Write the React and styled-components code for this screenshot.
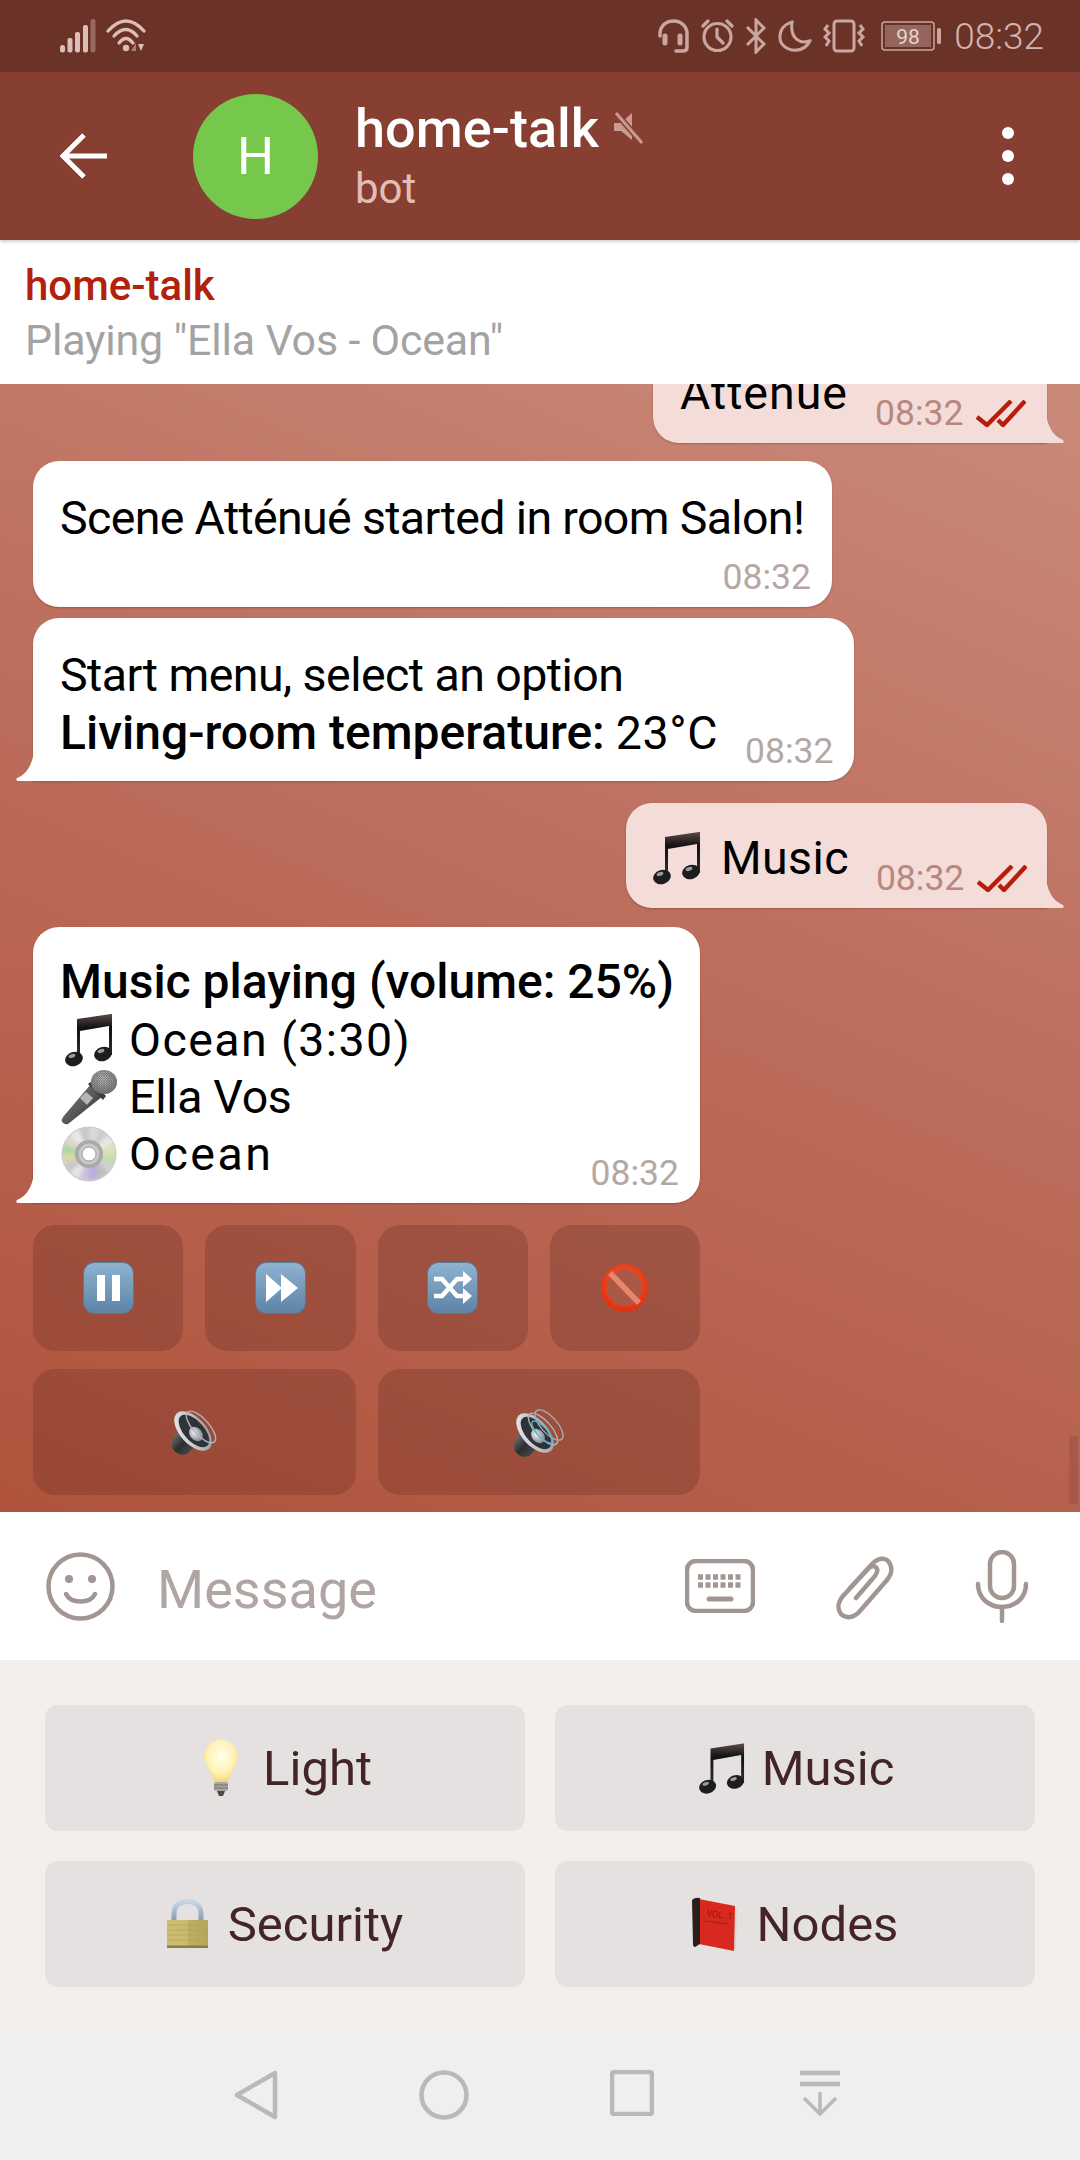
import React from "react";
import styled, { createGlobalStyle } from "styled-components";

const GlobalStyle = createGlobalStyle`
  html, body { margin: 0; padding: 0; background: #fff; }
  * { box-sizing: border-box; }
  body { font-family: Roboto, "Liberation Sans", sans-serif; }
`;

const Screen = styled.div`
  width: 1080px;
  height: 2160px;
  display: flex;
  flex-direction: column;
  overflow: hidden;
`;

const StatusBar = styled.div`
  height: 72px;
  flex: none;
  display: flex;
  align-items: center;
  padding: 0 36px 0 60px;
  background: #6b3228;
  color: #c9a6a0;
`;

const StatusGroup = styled.div`
  display: flex;
  align-items: center;
  gap: ${p => p.$gap || 11}px;
  margin-left: ${p => (p.$right ? "auto" : "0")};
`;

const Clock = styled.span`
  font-size: 37px;
  font-weight: 300;
  margin-left: 1px;
  color: #d2b3ae;
`;

const TopBar = styled.header`
  height: 168px;
  flex: none;
  display: flex;
  align-items: center;
  padding: 0 60px;
  background: #873f32;
  box-shadow: 0 2px 3px rgba(0, 0, 0, 0.18);
  position: relative;
  z-index: 3;
`;

const BackButton = styled.div`
  width: 133px;
  display: flex;
  align-items: center;
`;

const Avatar = styled.div`
  width: 125px;
  height: 125px;
  flex: none;
  border-radius: 50%;
  background: #76c84d;
  color: #fff;
  font-size: 52px;
  display: flex;
  align-items: center;
  justify-content: center;
`;

const TitleBlock = styled.div`
  margin-left: 37px;
  flex: 1;
  padding-top: 4px;
`;

const TitleRow = styled.div`
  display: flex;
  align-items: center;
  gap: 14px;
  height: 62px;
`;

const Title = styled.span`
  color: #fff;
  font-size: 54px;
  font-weight: 500;
`;

const Subtitle = styled.div`
  color: #e3bdb5;
  font-size: 42px;
  line-height: 60px;
`;

const DotsButton = styled.div`
  display: flex;
  flex-direction: column;
  gap: 11px;
  margin-right: 6px;
`;

const Dot = styled.i`
  width: 12px;
  height: 12px;
  border-radius: 50%;
  background: #fff;
`;

const Pinned = styled.div`
  height: 144px;
  flex: none;
  padding: 20px 25px 0;
  background: #fff;
  position: relative;
  z-index: 2;
`;

const PinnedName = styled.div`
  color: #b3200b;
  font-size: 42px;
  font-weight: 500;
  line-height: 52px;
`;

const PinnedText = styled.div`
  color: #a3a3a3;
  font-size: 43px;
  letter-spacing: -0.2px;
  line-height: 56px;
`;

const Chat = styled.main`
  flex: 1;
  min-height: 0;
  position: relative;
  overflow: hidden;
  display: flex;
  flex-direction: column;
  justify-content: flex-end;
  padding: 0 33px 17px;
  background: linear-gradient(203deg, #ca8a7a 0%, #bd6e5d 45%, #af533c 100%);
`;

const ScrollThumb = styled.div`
  position: absolute;
  right: 2px;
  bottom: 8px;
  width: 9px;
  height: 68px;
  background: rgba(120, 60, 50, 0.25);
`;

const Bubble = styled.div`
  flex: none;
  position: relative;
  display: flex;
  flex-direction: ${p => (p.$row ? "row" : "column")};
  align-items: ${p => (p.$row ? "flex-end" : "stretch")};
  align-self: ${p => (p.$out ? "flex-end" : "flex-start")};
  width: ${p => p.$w}px;
  margin-top: ${p => p.$mt || 0}px;
  padding: 26px 27px 10px 27px;
  background: ${p => (p.$out ? "#f4dcd8" : "#fff")};
  color: #000;
  border-radius: 26px;
  border-bottom-left-radius: ${p => (p.$tail && !p.$out ? 0 : 26)}px;
  border-bottom-right-radius: ${p => (p.$out ? 0 : 26)}px;
  box-shadow: 0 1px 2px rgba(70, 20, 10, 0.28);
`;

const Tail = styled.svg`
  position: absolute;
  bottom: 0;
  width: 18px;
  height: 34px;
  ${p => (p.$out ? "right: -17px;" : "left: -17px;")}
`;

const Text = styled.div`
  font-size: 46.5px;
  line-height: 57px;
  letter-spacing: ${p => p.$ls || 0}px;
  margin-top: ${p => p.$mt || 0}px;
  margin-bottom: ${p => p.$mb || 0}px;
  white-space: nowrap;
`;

const Strong = styled.b`
  font-weight: 500;
  font-size: 48px;
  letter-spacing: 0;
`;

const Temperature = styled.span`
  letter-spacing: 0.6px;
`;

const IconLine = styled.div`
  display: flex;
  align-items: center;
  gap: ${p => p.$gap || 12}px;
  font-size: 46.5px;
  letter-spacing: ${p => p.$ls || 0}px;
  height: 57px;
  white-space: nowrap;
  margin-bottom: ${p => p.$mb || 0}px;
`;

const EmojiSlot = styled.span`
  width: 57px;
  flex: none;
  display: flex;
  justify-content: center;
`;

const Meta = styled.div`
  display: flex;
  align-items: center;
  flex: none;
  font-size: 35.5px;
  line-height: 40px;
  height: 40px;
  gap: 13px;
  color: ${p => (p.$out ? "#b78880" : "#b5a8a4")};
  align-self: flex-end;
  margin-top: ${p => p.$mt || 0}px;
  margin-left: ${p => p.$ml || 0}px;
  margin-right: ${p => p.$mr ?? -6}px;
`;

const InlineGrid = styled.div`
  display: grid;
  grid-template-columns: repeat(${p => p.$cols}, 1fr);
  gap: 18px 22px;
  width: 667px;
  margin-top: ${p => p.$mt || 0}px;
  flex: none;
`;

const InlineButton = styled.div`
  height: 126px;
  border-radius: 22px;
  background: rgba(95, 40, 30, 0.27);
  display: flex;
  align-items: center;
  justify-content: center;
`;

const InputBar = styled.div`
  height: 148px;
  flex: none;
  display: flex;
  align-items: center;
  padding: 0 51px 0 46px;
  background: #fff;
  color: #a29693;
`;

const Placeholder = styled.div`
  flex: 1;
  margin-left: 42px;
  padding-top: 6px;
  color: #b0a5a2;
  font-size: 54px;
`;

const InputActions = styled.div`
  display: flex;
  align-items: center;
  gap: 81px;
`;

const KeyPanel = styled.div`
  height: 370px;
  flex: none;
  display: grid;
  grid-template-columns: 480px 480px;
  grid-auto-rows: 126px;
  gap: 30px;
  padding: 45px;
  background: #f2efed;
`;

const KeyButton = styled.div`
  border-radius: 13px;
  background: #e6e1e1;
  color: #432526;
  font-size: 49px;
  display: flex;
  align-items: center;
  justify-content: center;
  gap: ${p => p.$gap || 20}px;
  padding-left: ${p => p.$pl || 0}px;
`;

const NavBar = styled.nav`
  height: 130px;
  flex: none;
  display: grid;
  grid-template-columns: repeat(4, 48px);
  justify-content: center;
  align-content: center;
  column-gap: 140px;
  background: #efefef;
  color: #b9b9b9;
  justify-items: center;
  padding: 0 4px 0 0;
`;

const Check = () => (
  <svg width="50" height="27" viewBox="0 0 50 27" fill="none" stroke="#b71c0c" strokeWidth="4.4">
    <path d="M1 17 L11 25 L35 1" />
    <path d="M22 20 L27 25 L49 1" />
  </svg>
);

const LeftTail = () => (
  <Tail viewBox="0 0 18 34">
    <path d="M18 0 C18 14 12 27 1 31 C0 32 0 34 2 34 L18 34 Z" fill="#fff" />
  </Tail>
);

const RightTail = () => (
  <Tail $out viewBox="0 0 18 34">
    <path d="M0 0 C0 14 6 27 17 31 C18 32 18 34 16 34 L0 34 Z" fill="#f4dcd8" />
  </Tail>
);

const NoteEmoji = ({ id, w = 48, h = 54 }) => (
  <svg width={w} height={h} viewBox="0 0 48 54">
    <defs>
      <linearGradient id={id} x1="0" y1="0" x2="0" y2="1">
        <stop offset="0" stopColor="#5d4a4a" />
        <stop offset="0.3" stopColor="#111" />
        <stop offset="1" stopColor="#333" />
      </linearGradient>
    </defs>
    <path d="M12 6 L46 1 L47 1 L47 42 L44 42 L44 13 L15 18 L15 47 L12 47 Z" fill={`url(#${id})`} />
    <ellipse cx="9" cy="46" rx="9" ry="7" transform="rotate(-18 9 46)" fill="#1d1d1f" />
    <ellipse cx="38" cy="41" rx="9" ry="7" transform="rotate(-18 38 41)" fill="#1d1d1f" />
    <ellipse cx="7" cy="43" rx="3.5" ry="1.8" transform="rotate(-18 7 43)" fill="#9a9aa0" />
    <ellipse cx="36" cy="38" rx="3.5" ry="1.8" transform="rotate(-18 36 38)" fill="#9a9aa0" />
  </svg>
);

const MicEmoji = () => (
  <svg width="56" height="56" viewBox="0 0 56 56">
    <defs>
      <linearGradient id="micBody" x1="0" y1="0" x2="1" y2="1">
        <stop offset="0" stopColor="#7b7b7b" />
        <stop offset="0.5" stopColor="#5a5a5a" />
        <stop offset="1" stopColor="#1f1f1f" />
      </linearGradient>
      <radialGradient id="micHead" cx="0.45" cy="0.35" r="0.75">
        <stop offset="0" stopColor="#d0d0d0" />
        <stop offset="1" stopColor="#777" />
      </radialGradient>
      <pattern id="micMesh" width="2.4" height="2.4" patternUnits="userSpaceOnUse">
        <path d="M0 0 L2.4 2.4 M2.4 0 L0 2.4" stroke="#4a4a4a" strokeWidth="0.5" />
      </pattern>
    </defs>
    <path d="M30 15 L42 27 L7 55 Q4 56 1 53 Q0 51 2 48 Z" fill="url(#micBody)" />
    <path d="M19 29 L25 23 L32 29 L26 36 Z" fill="#b5b5b5" />
    <path d="M27 15 L42 31 L45 27 L31 12 Z" fill="#3d3d3d" />
    <ellipse cx="43" cy="13" rx="13" ry="12" fill="url(#micHead)" />
    <ellipse cx="43" cy="13" rx="13" ry="12" fill="url(#micMesh)" />
  </svg>
);

const wedge = (a, b) => {
  const p = d => [28 + 27 * Math.cos((d * Math.PI) / 180), 28 + 27 * Math.sin((d * Math.PI) / 180)];
  const [x1, y1] = p(a);
  const [x2, y2] = p(b);
  return `M28 28 L${x1} ${y1} A27 27 0 0 1 ${x2} ${y2} Z`;
};

const CD_COLORS = ["#dcdcdc", "#cbcbcb", "#e9e9e9", "#dfe0b8", "#bfe0a8", "#d0d0d0", "#bcbcbc", "#b9aedb", "#cfc0df", "#e6e6e6", "#c7c7c7", "#d9d9a8", "#a9d89c", "#dad6cf", "#ececec", "#c4c4c4"];

const CdEmoji = () => (
  <svg width="56" height="56" viewBox="0 0 56 56">
    <defs>
      <filter id="cdBlur" x="-10%" y="-10%" width="120%" height="120%">
        <feGaussianBlur stdDeviation="2.2" />
      </filter>
      <clipPath id="cdClip">
        <circle cx="28" cy="28" r="27" />
      </clipPath>
    </defs>
    <g clipPath="url(#cdClip)">
      <rect width="56" height="56" fill="#d4d4d4" />
      <g filter="url(#cdBlur)">
        {CD_COLORS.map((c, i) => (
          <path key={i} d={wedge(i * 22.5 - 90, (i + 1) * 22.5 - 90)} fill={c} />
        ))}
      </g>
    </g>
    <circle cx="28" cy="28" r="27" fill="none" stroke="#c9c9c9" strokeWidth="1" />
    <circle cx="28" cy="28" r="14" fill="#a9a9a9" />
    <circle cx="28" cy="28" r="10.5" fill="#c9c9c9" />
    <circle cx="28" cy="28" r="7" fill="#fff" stroke="#8d8d8d" strokeWidth="0.8" />
  </svg>
);

const BlueKey = ({ id, children }) => (
  <svg width="51" height="52" viewBox="0 0 51 52">
    <defs>
      <linearGradient id={id} x1="0" y1="0" x2="0" y2="1">
        <stop offset="0" stopColor="#8fb3d1" />
        <stop offset="1" stopColor="#5d83a5" />
      </linearGradient>
    </defs>
    <rect x="0.5" y="0.5" width="50" height="51" rx="11" fill={`url(#${id})`} stroke="#577a98" />
    {children}
  </svg>
);

const PauseEmoji = () => (
  <BlueKey id="pauseKey">
    <rect x="14" y="13" width="8" height="26" fill="#fff" />
    <rect x="29" y="13" width="8" height="26" fill="#fff" />
  </BlueKey>
);

const ForwardEmoji = () => (
  <BlueKey id="forwardKey">
    <path d="M11 12 L27 26 L11 40 Z M26 12 L43 26 L26 40 Z" fill="#fff" />
  </BlueKey>
);

const ShuffleEmoji = () => (
  <BlueKey id="shuffleKey">
    <path d="M7 17 H15 L30 34 H38" fill="none" stroke="#fff" strokeWidth="4.5" />
    <path d="M7 34 H15 L30 17 H38" fill="none" stroke="#fff" strokeWidth="4.5" />
    <path d="M36 9 L45 17 L36 25 Z M36 26 L45 34 L36 42 Z" fill="#fff" />
  </BlueKey>
);

const NoEntryEmoji = () => (
  <svg width="47" height="48" viewBox="0 0 47 48">
    <defs>
      <radialGradient id="noEntry" cx="0.5" cy="0.4" r="0.65">
        <stop offset="0" stopColor="#fa6238" />
        <stop offset="1" stopColor="#e2300f" />
      </radialGradient>
    </defs>
    <ellipse cx="23.5" cy="24" rx="20.5" ry="21" fill="#a85a46" stroke="url(#noEntry)" strokeWidth="6" />
    <path d="M9 9 L38 39" stroke="#e8866c" strokeWidth="5.5" />
  </svg>
);

const SpeakerEmoji = ({ id, loud }) => (
  <svg width={loud ? 53 : 48} height={loud ? 52 : 48} viewBox={loud ? "0 -4 53 52" : "0 0 48 48"}>
    <defs>
      <linearGradient id={id} x1="0" y1="0" x2="1" y2="1">
        <stop offset="0" stopColor="#f0f2f4" />
        <stop offset="1" stopColor="#8f959a" />
      </linearGradient>
      <radialGradient id={`${id}Ball`} cx="0.45" cy="0.35" r="0.7">
        <stop offset="0" stopColor="#eef1f3" />
        <stop offset="1" stopColor="#767d83" />
      </radialGradient>
      <linearGradient id={`${id}Back`} x1="0" y1="0" x2="1" y2="1">
        <stop offset="0" stopColor="#8b8f93" />
        <stop offset="0.5" stopColor="#2b2d2f" />
        <stop offset="1" stopColor="#55595c" />
      </linearGradient>
    </defs>
    <path d="M5 27 L15 20 L27 36 L17 46 Q9 49 3 41 Q0 34 5 27 Z" fill={`url(#${id}Back)`} />
    <ellipse cx="23" cy="23" rx="13" ry="24" transform="rotate(-42 23 23)" fill={`url(#${id})`} />
    <ellipse cx="24" cy="23" rx="10" ry="20" transform="rotate(-42 24 23)" fill="#2f3337" />
    <ellipse cx="26" cy="26" rx="6" ry="8" transform="rotate(-42 26 26)" fill={`url(#${id}Ball)`} />
    <ellipse cx="31" cy="19" rx="8" ry="20" transform="rotate(-42 31 19)" fill="none" stroke="#aeb8bc" strokeWidth="1.4" />
    {loud && <ellipse cx="37" cy="15" rx="8" ry="19" transform="rotate(-42 37 15)" fill="none" stroke="#9fb0b6" strokeWidth="1.4" />}
    {loud && <ellipse cx="30" cy="22" rx="5" ry="14" transform="rotate(-42 30 22)" fill="none" stroke="#57b4ce" strokeWidth="1.4" />}
  </svg>
);

const BulbEmoji = () => (
  <svg width="34" height="56" viewBox="0 0 34 56">
    <defs>
      <radialGradient id="bulbGlow" cx="0.5" cy="0.4" r="0.6">
        <stop offset="0" stopColor="#fffef0" />
        <stop offset="0.65" stopColor="#fff3b5" />
        <stop offset="1" stopColor="#f1d777" />
      </radialGradient>
    </defs>
    <path d="M17 0 C27 0 34 8 34 17 C34 26 25 33 24 42 L10 42 C9 33 0 26 0 17 C0 8 7 0 17 0 Z" fill="url(#bulbGlow)" />
    <rect x="10" y="42" width="14" height="9" rx="2" fill="#a9a89f" />
    <path d="M10 45 H24 M10 48 H24" stroke="#6f6e66" strokeWidth="1" />
    <path d="M13 51 H21 L19 56 H15 Z" fill="#4a4a46" />
  </svg>
);

const LockEmoji = () => (
  <svg width="41" height="50" viewBox="0 0 41 50">
    <defs>
      <linearGradient id="lockBody" x1="0" y1="0" x2="1" y2="0">
        <stop offset="0" stopColor="#cdbf70" />
        <stop offset="0.5" stopColor="#c9bb6c" />
        <stop offset="0.52" stopColor="#bcae62" />
        <stop offset="1" stopColor="#b4a65c" />
      </linearGradient>
      <linearGradient id="lockShackle" x1="0" y1="0" x2="0" y2="1">
        <stop offset="0" stopColor="#c6d6e6" />
        <stop offset="1" stopColor="#8098ad" />
      </linearGradient>
    </defs>
    <path d="M7 23 V15 C7 6 13 2.5 20.5 2.5 C28 2.5 34 6 34 15 V23" fill="none" stroke="url(#lockShackle)" strokeWidth="5" />
    <rect x="0" y="21" width="41" height="27" rx="1" fill="url(#lockBody)" />
    <path d="M0 26 H41 M0 31 H41 M0 36 H41 M0 41 H41" stroke="#b3a45c" strokeWidth="0.8" />
    <rect x="0" y="46.5" width="41" height="2.5" fill="#8a7e48" />
  </svg>
);

const BookEmoji = () => (
  <svg width="45" height="55" viewBox="0 0 45 55">
    <path d="M8 3 L45 11 L44 53 L7 47 Z" fill="#d9d4cf" />
    <path d="M7 2 L43 9 L42 54 L7 47 Z" fill="#d9281f" />
    <path d="M0 3 Q3 0 8 1 L8 47 L3 50 Q1 50 1 47 Z" fill="#2a1f1d" />
    <text x="14" y="19" fontSize="9" fill="#97170f" fontFamily="Roboto, sans-serif" transform="rotate(8 14 19)">VOL. 1</text>
    <path d="M13 24 L36 27" stroke="#a51c14" strokeWidth="1.2" />
  </svg>
);

const SignalIcon = () => (
  <svg width="36" height="34" viewBox="0 0 36 34" fill="#dcbdb8">
    <rect x="0" y="26" width="5" height="7.5" rx="2.5" />
    <rect x="7.5" y="19" width="5" height="14.5" rx="2" />
    <rect x="15" y="13" width="5" height="20.5" rx="2" />
    <rect x="23" y="6" width="5" height="27.5" rx="2" />
    <rect x="30.5" y="0" width="5" height="33.5" rx="2" opacity="0.4" />
  </svg>
);

const WifiIcon = () => (
  <svg width="42" height="34" viewBox="0 0 42 34" fill="none" stroke="#dcbdb8" strokeWidth="3.3" strokeLinecap="round">
    <path d="M3 12 Q21 -8 39 12" />
    <path d="M9 17 Q21 4 32 17" />
    <path d="M14 24 Q21 15 28 24" />
    <circle cx="21" cy="29" r="3.2" fill="#dcbdb8" stroke="none" />
    <path d="M26 32 L31 24 V32 Z" fill="#dcbdb8" stroke="none" opacity="0.55" />
    <path d="M33 25 H39 L36 32 Z" fill="#dcbdb8" stroke="none" />
  </svg>
);

const HeadsetIcon = () => (
  <svg width="33" height="34" viewBox="0 0 33 34" fill="none" stroke="currentColor" strokeWidth="3.5" strokeLinecap="round">
    <path d="M3 17 V15 C3 7 9 2 16.5 2 C24 2 30 7 30 15 V28 C30 31 28 32 26 32 H19" />
    <path d="M8 17 V24 M23 17 V24" strokeWidth="5" />
  </svg>
);

const AlarmIcon = () => (
  <svg width="33" height="34" viewBox="0 0 33 34" fill="none" stroke="currentColor" strokeWidth="3.2" strokeLinecap="round">
    <circle cx="16.5" cy="18" r="13.5" />
    <path d="M16 10 V18 L22 24" />
    <path d="M2 7 L7 2 M31 7 L26 2" />
  </svg>
);

const BluetoothIcon = () => (
  <svg width="22" height="36" viewBox="0 0 22 36" fill="none" stroke="currentColor" strokeWidth="3">
    <path d="M2 9 L19 26 L11 34 V2 L19 10 L2 27" />
  </svg>
);

const MoonIcon = () => (
  <svg width="34" height="34" viewBox="0 0 36 34" fill="none" stroke="currentColor" strokeWidth="3.2">
    <path d="M15 2 C6 5 2 11 2 18 C2 26 9 32 18 32 C25 32 31 28 34 22 C24 26 12 20 15 2 Z" strokeLinejoin="round" />
  </svg>
);

const VibrateIcon = () => (
  <svg width="47" height="34" viewBox="0 0 47 34" fill="none" stroke="currentColor" strokeWidth="3">
    <rect x="11" y="2" width="20" height="30" rx="3" />
    <path d="M5 6 L2 10 L6 14 L2 18 L6 22 L3 27" />
    <path d="M37 6 L40 10 L36 14 L40 18 L36 22 L39 27" />
  </svg>
);

const BatteryIcon = () => (
  <svg width="61" height="30" viewBox="0 0 61 30">
    <rect x="1" y="1" width="52" height="28" rx="3" fill="none" stroke="currentColor" strokeWidth="1.5" />
    <rect x="4" y="4" width="46" height="22" fill="currentColor" opacity="0.45" />
    <rect x="56" y="7" width="4" height="16" rx="1.5" fill="currentColor" />
    <text x="27" y="23" textAnchor="middle" fontSize="21" fill="#e6d3d0" fontFamily="Roboto, sans-serif">98</text>
  </svg>
);

const ArrowBack = () => (
  <svg width="48" height="46" viewBox="0 0 48 46" fill="none" stroke="#fff" strokeWidth="5">
    <path d="M47 23 H4 M24 2 L3 23 L24 44" />
  </svg>
);

const MuteIcon = () => (
  <svg width="30" height="32" viewBox="0 0 30 32">
    <path d="M1 11 H8 L19 1 V28 L8 19 H1 Z" fill="#c99a91" />
    <path d="M3 1 L29 31" stroke="#873f32" strokeWidth="6" />
    <path d="M3 1 L29 31" stroke="#c99a91" strokeWidth="3" />
  </svg>
);

const SmileIcon = () => (
  <svg width="69" height="69" viewBox="0 0 69 69" fill="none" stroke="currentColor" strokeWidth="4.5">
    <circle cx="34.5" cy="34.5" r="32" />
    <circle cx="23" cy="27" r="4" fill="currentColor" stroke="none" />
    <circle cx="46" cy="27" r="4" fill="currentColor" stroke="none" />
    <path d="M20 42 C25 52 44 52 49 42" strokeLinecap="round" />
  </svg>
);

const KeyboardIcon = () => (
  <svg width="70" height="54" viewBox="0 0 70 54" fill="none" stroke="currentColor" strokeWidth="4.5">
    <rect x="2" y="2" width="66" height="50" rx="9" />
    <path d="M13 18 H57 M13 26 H57" strokeWidth="5.5" strokeDasharray="5 2.5" />
    <path d="M24 40 H46" strokeWidth="5" strokeLinecap="round" />
  </svg>
);

const ClipIcon = () => (
  <svg width="58" height="68" viewBox="0 0 58 68" fill="none" stroke="currentColor" strokeWidth="4.5" strokeLinecap="round">
    <path d="M14 36 L36 12 C43 5 51 5 54 12 C57 18 55 23 51 28 L24 59 C18 66 10 67 5 62 C1 57 2 50 7 44 L33 16 C36 13 40 14 41 17 C42 19 41 21 39 24 L20 46" />
  </svg>
);

const MicIcon = () => (
  <svg width="54" height="73" viewBox="0 0 54 73" fill="none" stroke="currentColor" strokeWidth="4.5" strokeLinecap="round">
    <rect x="15" y="2" width="24" height="46" rx="12" />
    <path d="M3 34 C3 48 14 57 27 57 C40 57 51 48 51 34" />
    <path d="M27 57 V71" />
  </svg>
);

const NavBack = () => (
  <svg width="44" height="50" viewBox="0 0 44 50" fill="none" stroke="currentColor" strokeWidth="4.5" strokeLinejoin="round">
    <path d="M41 3 V47 L3 25 Z" />
  </svg>
);

const NavHome = () => (
  <svg width="50" height="50" viewBox="0 0 50 50" fill="none" stroke="currentColor" strokeWidth="4.5">
    <circle cx="25" cy="25" r="22.5" />
  </svg>
);

const NavRecent = () => (
  <svg width="44" height="46" viewBox="0 0 44 46" fill="none" stroke="currentColor" strokeWidth="4.5">
    <rect x="2" y="2" width="40" height="42" rx="2" />
  </svg>
);

const NavDown = () => (
  <svg width="42" height="46" viewBox="0 0 42 46" fill="none" stroke="currentColor">
    <path d="M1 3 H41 M1 14 H41" strokeWidth="4.5" />
    <path d="M21 22 V44 M5 28 L21 44 L37 28" strokeWidth="3.5" />
  </svg>
);

export default function App() {
  return (
    <Screen>
      <GlobalStyle />
      <StatusBar>
        <StatusGroup $gap={9}>
          <SignalIcon />
          <WifiIcon />
        </StatusGroup>
        <StatusGroup $right>
          <HeadsetIcon />
          <AlarmIcon />
          <BluetoothIcon />
          <MoonIcon />
          <VibrateIcon />
          <BatteryIcon />
          <Clock>08:32</Clock>
        </StatusGroup>
      </StatusBar>

      <TopBar>
        <BackButton>
          <ArrowBack />
        </BackButton>
        <Avatar>H</Avatar>
        <TitleBlock>
          <TitleRow>
            <Title>home-talk</Title>
            <MuteIcon />
          </TitleRow>
          <Subtitle>bot</Subtitle>
        </TitleBlock>
        <DotsButton>
          <Dot />
          <Dot />
          <Dot />
        </DotsButton>
      </TopBar>

      <Pinned>
        <PinnedName>home-talk</PinnedName>
        <PinnedText>Playing "Ella Vos - Ocean"</PinnedText>
      </Pinned>

      <Chat>
        <Bubble $out $row $w={394}>
          <Text $mb={11} $ls={1}>Atténué</Text>
          <Meta $out $ml={27} $mr={-7}>
            08:32
            <Check />
          </Meta>
          <RightTail />
        </Bubble>

        <Bubble $mt={18} $w={799}>
          <Text $mt={3} $ls={-0.65}>Scene Atténué started in room Salon!</Text>
          <Meta $mt={10}>08:32</Meta>
        </Bubble>

        <Bubble $mt={11} $row $tail $w={821}>
          <Text $mt={3} $mb={9} $ls={-0.55}>
            Start menu, select an option
            <br />
            <Strong>Living-room temperature:</Strong> <Temperature>23°C</Temperature>
          </Text>
          <Meta $ml={27} $mr={-5}>08:32</Meta>
          <LeftTail />
        </Bubble>

        <Bubble $out $row $mt={22} $w={421}>
          <IconLine $mb={12} $gap={20} $ls={0.4}>
            <NoteEmoji id="noteSent" />
            Music
          </IconLine>
          <Meta $out $ml={27} $mr={-7}>
            08:32
            <Check />
          </Meta>
          <RightTail />
        </Bubble>

        <Bubble $mt={19} $tail $w={667}>
          <Text>
            <Strong>Music playing (volume: 25%)</Strong>
          </Text>
          <IconLine $ls={1.4}>
            <EmojiSlot><NoteEmoji id="noteTrack" /></EmojiSlot>
            Ocean (3:30)
          </IconLine>
          <IconLine $ls={-0.3}>
            <EmojiSlot><MicEmoji /></EmojiSlot>
            Ella Vos
          </IconLine>
          <IconLine $ls={2.5}>
            <EmojiSlot><CdEmoji /></EmojiSlot>
            Ocean
          </IconLine>
          <Meta $mt={-29}>08:32</Meta>
          <LeftTail />
        </Bubble>

        <InlineGrid $cols={4} $mt={22}>
          <InlineButton><PauseEmoji /></InlineButton>
          <InlineButton><ForwardEmoji /></InlineButton>
          <InlineButton><ShuffleEmoji /></InlineButton>
          <InlineButton><NoEntryEmoji /></InlineButton>
        </InlineGrid>
        <InlineGrid $cols={2} $mt={18}>
          <InlineButton><SpeakerEmoji id="speakerLow" /></InlineButton>
          <InlineButton><SpeakerEmoji id="speakerHigh" loud /></InlineButton>
        </InlineGrid>
        <ScrollThumb />
      </Chat>

      <InputBar>
        <SmileIcon />
        <Placeholder>Message</Placeholder>
        <InputActions>
          <KeyboardIcon />
          <ClipIcon />
          <MicIcon />
        </InputActions>
      </InputBar>

      <KeyPanel>
        <KeyButton $gap={25} $pl={6}><BulbEmoji />Light</KeyButton>
        <KeyButton $gap={17} $pl={3}><NoteEmoji id="noteKey" w={46} h={55} />Music</KeyButton>
        <KeyButton><LockEmoji />Security</KeyButton>
        <KeyButton><BookEmoji />Nodes</KeyButton>
      </KeyPanel>

      <NavBar>
        <NavBack />
        <NavHome />
        <NavRecent />
        <NavDown />
      </NavBar>
    </Screen>
  );
}
